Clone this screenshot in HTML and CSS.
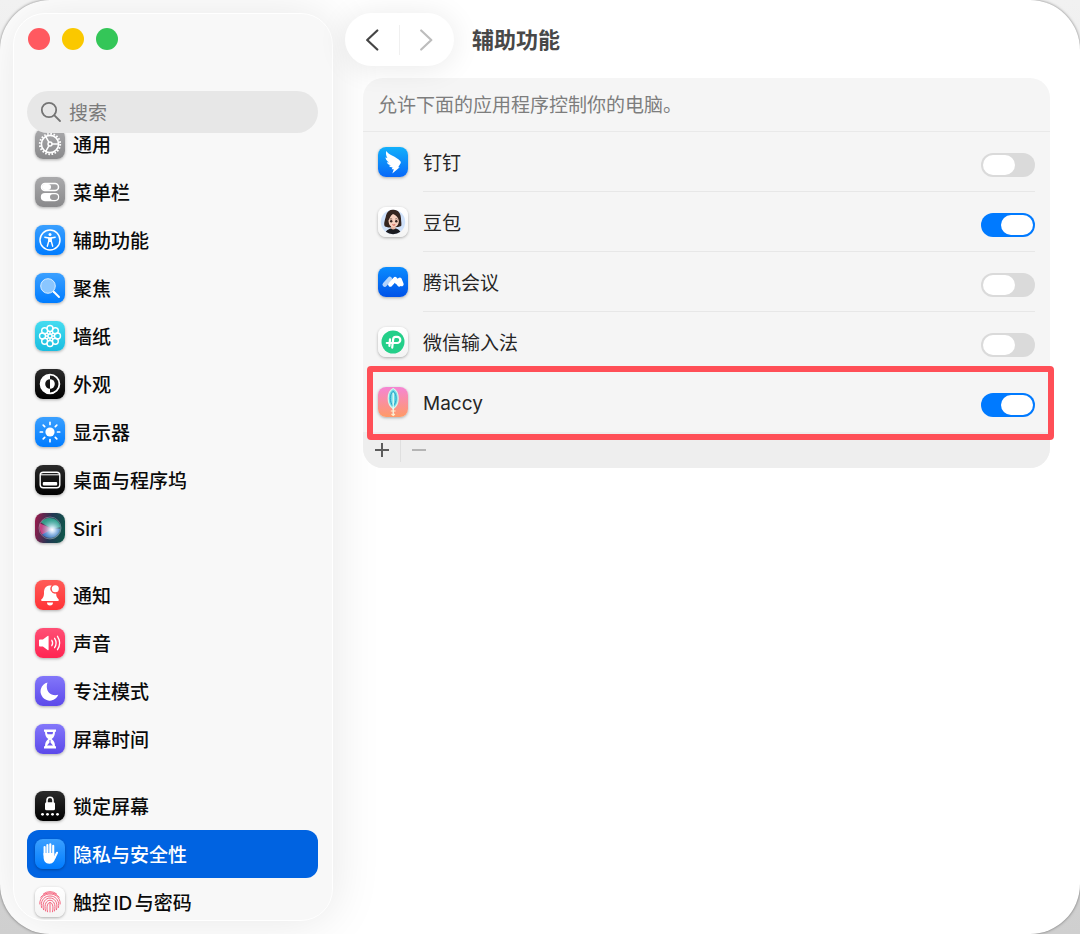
FILE: index.html
```html
<!DOCTYPE html>
<html lang="zh-CN">
<head>
    <meta charset="UTF-8">
    <meta name="viewport" content="width=device-width, initial-scale=1.0">
    <title>辅助功能</title>
    <link rel="stylesheet" href="styles.css">
</head>
<body>

    <div class="window">

        <!-- Sidebar -->
        <aside class="sidebar">
            <div class="traffic">
                <button class="light light-close" aria-label="关闭"></button>
                <button class="light light-min" aria-label="最小化"></button>
                <button class="light light-zoom" aria-label="缩放"></button>
            </div>

            <div class="search">
                <label for="search" aria-label="搜索">
                    <svg width="22" height="22" viewBox="0 0 22 22" fill="none" stroke="#747474" stroke-width="1.8" stroke-linecap="round"><circle cx="9" cy="9" r="7.2"/><path d="M14.4 14.4L20 20"/></svg>
                </label>
                <input type="text" id="search" placeholder="搜索">
            </div>

            <nav class="menu">
                <div class="menu-group">
                    <a class="menu-item" href="#">
                        <svg class="tile tile-gray" viewBox="0 0 30 30" fill="none" stroke="#fff"><circle cx="15" cy="15" r="10.2" stroke-width="1.9" stroke-dasharray="1.6 1.604"/><circle cx="15" cy="15" r="8.6" stroke-width="1.6"/><circle cx="15" cy="15" r="2" stroke-width="1.5"/><path d="M17 15h6.400M14 13.300L10.800 7.700M14 16.700L10.800 22.300" stroke-width="1.5"/></svg>
                        <span>通用</span>
                    </a>
                    <a class="menu-item" href="#">
                        <svg class="tile tile-gray" viewBox="0 0 30 30"><rect x="6.500" y="6.500" width="17" height="7" rx="3.500" fill="none" stroke="#fff" stroke-width="1.500"/><rect x="7" y="7" width="9" height="6" rx="3" fill="#fff"/><rect x="5.800" y="16" width="18.400" height="8.200" rx="4.100" fill="#fff"/><rect x="15" y="17.300" width="8" height="5.600" rx="2.800" fill="#9a9a9c"/></svg>
                        <span>菜单栏</span>
                    </a>
                    <a class="menu-item" href="#">
                        <svg class="tile tile-blue" viewBox="0 0 30 30"><circle cx="15" cy="15" r="10" fill="none" stroke="#fff" stroke-width="1.500"/><circle cx="15" cy="9.600" r="1.500" fill="#fff"/><path d="M9.800 12.200l4 .8M20.200 12.200l-4 .8M13.800 16l-1.500 5.200M16.200 16l1.500 5.200" fill="none" stroke="#fff" stroke-width="1.400" stroke-linecap="round" stroke-linejoin="round"/><path d="M13.100 12.300h3.800v4.700h-3.800z" fill="#fff"/></svg>
                        <span>辅助功能</span>
                    </a>
                    <a class="menu-item" href="#">
                        <svg class="tile tile-blue" viewBox="0 0 30 30"><path d="M18.500 18.500L24 24" stroke="#fff" stroke-width="1.900" stroke-linecap="round"/><circle cx="13" cy="13" r="7.300" fill="#8ac6ff" stroke="#d6ecff" stroke-width="1"/></svg>
                        <span>聚焦</span>
                    </a>
                    <a class="menu-item" href="#">
                        <svg class="tile tile-cyan" viewBox="0 0 30 30" fill="none" stroke="#fff" stroke-width="1.400"><circle cx="15" cy="7.500" r="3"/><circle cx="20.300" cy="9.700" r="3"/><circle cx="22.500" cy="15" r="3"/><circle cx="20.300" cy="20.300" r="3"/><circle cx="15" cy="22.500" r="3"/><circle cx="9.700" cy="20.300" r="3"/><circle cx="7.500" cy="15" r="3"/><circle cx="9.700" cy="9.700" r="3"/><circle cx="15" cy="15" r="2"/><path d="M15 10.500v2.500M15 17v2.500M10.500 15h2.500M17 15h2.500M11.800 11.800l1.800 1.800M16.400 16.400l1.800 1.800M18.200 11.800l-1.800 1.800M13.600 16.400l-1.800 1.800"/></svg>
                        <span>墙纸</span>
                    </a>
                    <a class="menu-item" href="#">
                        <svg class="tile tile-black" viewBox="0 0 30 30"><circle cx="15" cy="15" r="9.400" fill="none" stroke="#fff" stroke-width="1.800"/><path d="M15 5.600a9.400 9.400 0 0 0 0 18.800v-4.600a4.800 4.800 0 0 1 0-9.600z" fill="#fff"/><path d="M15 10.200a4.800 4.800 0 0 1 0 9.600z" fill="#fff"/></svg>
                        <span>外观</span>
                    </a>
                    <a class="menu-item" href="#">
                        <svg class="tile tile-blue" viewBox="0 0 30 30" stroke="#fff" stroke-width="1.700" stroke-linecap="round"><circle cx="15" cy="15" r="4.600" fill="#fff" stroke="none"/><path d="M15 5.300v2.200M15 22.500v2.200M5.300 15h2.200M22.500 15h2.200M8.200 8.200l1.500 1.500M20.300 20.300l1.500 1.500M21.800 8.200l-1.500 1.500M9.700 20.300l-1.500 1.500"/></svg>
                        <span>显示器</span>
                    </a>
                    <a class="menu-item" href="#">
                        <svg class="tile tile-black" viewBox="0 0 30 30"><rect x="5.200" y="7.200" width="19.600" height="15.600" rx="3" fill="none" stroke="#fff" stroke-width="1.400"/><path d="M6 9.800h18" stroke="#fff" stroke-width="1"/><rect x="7.800" y="17" width="14.400" height="3.600" rx="1" fill="#fff"/></svg>
                        <span>桌面与程序坞</span>
                    </a>
                    <a class="menu-item" href="#">
                        <svg class="tile tile-siri" viewBox="0 0 30 30">
                            <defs>
                                <radialGradient id="orb" cx=".6" cy=".58" r=".5"><stop offset="0" stop-color="#fff"/><stop offset=".25" stop-color="#e4f2ff" stop-opacity=".85"/><stop offset="1" stop-color="#8fc4dc" stop-opacity="0"/></radialGradient>
                            </defs>
                            <path d="M6 9.500C10 2.500 24 3.500 25.200 14L17 16z" fill="#2fb896" opacity=".8"/>
                            <path d="M7 21C11 27 23 26.500 25 16L16 15z" fill="#3379dc" opacity=".8"/>
                            <path d="M5 10.500Q3.500 16 7 21.500L18 16z" fill="#ec4b93" opacity=".75"/>
                            <circle cx="15" cy="15" r="11" fill="url(#orb)" stroke="#d5dfe8" stroke-opacity=".45" stroke-width=".8"/>
                        </svg>
                        <span>Siri</span>
                    </a>
                </div>

                <div class="menu-group">
                    <a class="menu-item" href="#">
                        <svg class="tile tile-red" viewBox="0 0 30 30"><path d="M14.500 5.400c-4 .3-5.500 3.500-5.500 7 0 4-.8 5.300-2.500 6.800-.7.700-.3 1.800.6 1.800h15.800c.9 0 1.300-1.100.6-1.800-1.500-1.400-2.200-2.500-2.400-5.600a4.900 4.900 0 0 1-4.400-8.200z" fill="#fff"/><circle cx="20.300" cy="8.800" r="3.500" fill="#fff"/><path d="M12 22.400h6a3 3 0 0 1-6 0z" fill="#fff"/></svg>
                        <span>通知</span>
                    </a>
                    <a class="menu-item" href="#">
                        <svg class="tile tile-pink" viewBox="0 0 30 30"><path d="M4 12.500q0-.9.900-.9h3L12.600 8q1-.7 1 .5v13q0 1.200-1 .5L7.900 18.400h-3q-.9 0-.9-.9z" fill="#fff"/><g fill="none" stroke="#fff" stroke-width="1.300" stroke-linecap="round"><path d="M16.800 12.300q1.700 2.700 0 5.400"/><path d="M19.600 10.300q3 4.700 0 9.400"/><path d="M22.500 8.300q4.300 6.700 0 13.400"/></g></svg>
                        <span>声音</span>
                    </a>
                    <a class="menu-item" href="#">
                        <svg class="tile tile-purple" viewBox="0 0 30 30"><path d="M12.500 6.500C9.800 14 15 21 23.300 18.800A9.200 9.200 0 1 1 12.500 6.500z" fill="#fff"/></svg>
                        <span>专注模式</span>
                    </a>
                    <a class="menu-item" href="#">
                        <svg class="tile tile-purple" viewBox="0 0 30 30"><path d="M9 5.500h12v2.200h-1c0 3.500-1 5.500-3.300 7.300 2.300 1.800 3.300 3.800 3.300 7.300h1v2.200H9v-2.200h1c0-3.500 1-5.500 3.300-7.300C11 13.200 10 11.200 10 7.700H9z" fill="#fff"/><path d="M12 8h6q0 1.200-.6 2.300h-4.800Q12 9.200 12 8zM14.500 16h1v2.500l2.500 3h-6l2.500-3z" fill="#6f5cf0"/></svg>
                        <span>屏幕时间</span>
                    </a>
                </div>

                <div class="menu-group">
                    <a class="menu-item" href="#">
                        <svg class="tile tile-black" viewBox="0 0 30 30" fill="#fff"><rect x="10" y="11.200" width="10" height="8" rx="1.500"/><path d="M12 12V9.300a3 3 0 0 1 6 0V12" fill="none" stroke="#fff" stroke-width="1.600"/><circle cx="7.500" cy="23.300" r="1.400"/><circle cx="12.500" cy="23.300" r="1.400"/><circle cx="17.500" cy="23.300" r="1.400"/><circle cx="22.500" cy="23.300" r="1.400"/></svg>
                        <span>锁定屏幕</span>
                    </a>
                    <a class="menu-item active" href="#">
                        <svg class="tile tile-blue" viewBox="0 0 30 30"><g fill="none" stroke="#fff" stroke-width="2.100" stroke-linecap="round"><path d="M9.600 8v8M12.400 6v9M15.300 5.300v9M18.200 6.800v9M22 13.800l-2.500 5"/></g><path d="M8.550 14h10.700v3.500l1.500.5c-1 3.500-2.500 6.700-6.300 6.700-4.200 0-5.900-3-5.900-6.700z" fill="#fff"/></svg>
                        <span>隐私与安全性</span>
                    </a>
                    <a class="menu-item" href="#">
                        <svg class="tile tile-white" viewBox="0 0 30 30" fill="none" stroke="#f4657f" stroke-width="1" stroke-linecap="round"><path d="M8.500 6.800a10.500 10.500 0 0 1 13 0M5.800 10.300C10 4.300 20 4.300 24.200 10.300M4.800 17C4 3.500 26 3.500 25.200 17M6.500 20.500C3.500 5 26.500 5 23.500 20.500M8.500 22.700C4.500 7 25.500 7 21.500 22.700M10.500 24C6.800 9.500 23.200 9.500 19.500 24M12.500 24.800c-3-12.500 8-12.500 5 0M15 15.500v9.500"/></svg>
                        <span>触控ID与密码</span>
                    </a>
                </div>
            </nav>
        </aside>

        <!-- Detail pane -->
        <main class="content">
            <header class="toolbar">
                <div class="history">
                    <button aria-label="后退"><svg width="14" height="22" viewBox="0 0 14 22" fill="none" stroke="#454545" stroke-width="2.200" stroke-linecap="round" stroke-linejoin="round"><path d="M12.300 1.500L2.200 11l10.100 9.500"/></svg></button>
                    <button aria-label="前进" disabled><svg width="14" height="22" viewBox="0 0 14 22" fill="none" stroke="#bdbdbd" stroke-width="2.200" stroke-linecap="round" stroke-linejoin="round"><path d="M1.200 1.500L11.300 11 1.200 20.500"/></svg></button>
                </div>
                <h1>辅助功能</h1>
            </header>

            <section class="panel">
                <p class="panel-note">允许下面的应用程序控制你的电脑。</p>

                <div class="app">
                    <svg class="tile tile-ding" viewBox="0 0 30 30"><path d="M8.300 4c1.200 2 3 3.200 5.700 4.600 3.500 1.800 6.500 3.500 8.200 5.400.8.900.8 1.500.3 2.400l-2.300 3.800h1.500l-7.400 6.300 1.500-4.300h-2.200l1-1.700c-1.600 0-3-.6-3.700-1.700l2-.4c-2.200-.6-3.600-1.500-4.100-3.100l2.200.2C8.700 13.800 7.600 12.200 7.500 10.300l2 .9C8.100 9 7.600 6.500 8.300 4z" fill="#fff"/></svg>
                    <div class="app-row">
                        <label for="app-dingtalk">钉钉</label>
                        <input class="switch" type="checkbox" role="switch" id="app-dingtalk">
                    </div>
                </div>
                <div class="app">
                    <svg class="tile tile-white" viewBox="0 0 30 30">
                        <circle cx="15" cy="15" r="12.200" fill="#cfe1fa"/>
                        <path d="M7 19.500C5 17 7.500 12 8 8.500 9 4.500 12 2.500 15.500 2.800c5 0 7.500 4 7.500 9 0 2.500.8 5 .2 7.200l-3.200 1-9.500.5z" fill="#33241f"/>
                        <path d="M13 18.500h4.500V23H13z" fill="#e8b8a4"/>
                        <path d="M7.800 24.800c1.700-2.300 3.700-3 5.200-3.300 1.500 1.200 3 1.200 4.500 0 1.800.3 3.700 1.200 4.900 3.300a12.200 12.200 0 0 1-14.600 0z" fill="#1b1b20"/>
                        <path d="M10.500 13.500c1.200-2.300 2-5 4.500-6.500 2.800 1 5.300 3.500 5.800 6.500.2 3.500-1.500 6.500-5.200 6.700-3.400-.2-5-3-5.100-6.700z" fill="#f7d0bf"/>
                        <path d="M11.800 12.200q1.200-.8 2.400-.1M17.300 12q1.200-.7 2.300.2" stroke="#4a332d" stroke-width=".7" fill="none"/>
                        <circle cx="13.200" cy="14.300" r="1.200" fill="#33221f"/><circle cx="18.300" cy="14.300" r="1.200" fill="#33221f"/>
                        <path d="M14.800 17.900q1 .7 2.100 0" stroke="#c9483f" stroke-width="1" fill="none" stroke-linecap="round"/>
                    </svg>
                    <div class="app-row">
                        <label for="app-doubao">豆包</label>
                        <input class="switch" type="checkbox" role="switch" id="app-doubao" checked>
                    </div>
                </div>
                <div class="app">
                    <svg class="tile tile-meeting" viewBox="0 0 30 30" fill="none" stroke="#fff" stroke-linejoin="round" stroke-linecap="round"><path d="M6.800 17.500l5-5.500" stroke-width="4.600" opacity=".7"/><path d="M12.300 17.500l4.800-5.300 4.200 5.100" stroke-width="4.400"/><path d="M18.800 15l3-2.400 1.900 4.700" stroke-width="4"/></svg>
                    <div class="app-row">
                        <label for="app-meeting">腾讯会议</label>
                        <input class="switch" type="checkbox" role="switch" id="app-meeting">
                    </div>
                </div>
                <div class="app">
                    <svg class="tile tile-white" viewBox="0 0 30 30"><circle cx="15" cy="15" r="11.500" fill="#24cf89"/><path d="M14.200 20.600l1-8.600q.3-2.200 2.400-2.200h1.600a3 3 0 0 1 0 6.200H8.800M12 12.300l-.6 6.600" fill="none" stroke="#fff" stroke-width="2.200" stroke-linecap="round" stroke-linejoin="round"/></svg>
                    <div class="app-row">
                        <label for="app-wechat">微信输入法</label>
                        <input class="switch" type="checkbox" role="switch" id="app-wechat">
                    </div>
                </div>
                <div class="app highlighted">
                    <svg class="tile tile-maccy" viewBox="0 0 30 30"><path d="M15.200 1.500c3.600 1.800 5 6 5 10 0 4.500-1.700 8-5 10.300-3.300-2.300-5-5.800-5-10.300 0-4 1.400-8.200 5-10z" fill="#6adbe6" stroke="#d5f7ea" stroke-width="1.200"/><path d="M15.200 4.200c2 1.500 2.900 4.300 2.900 7.200 0 3-.9 5.600-2.900 7.600-2-2-2.900-4.600-2.900-7.600 0-2.900.9-5.700 2.900-7.200z" fill="none" stroke="#2f9fc4" stroke-width="1"/><path d="M15.200 6v22" stroke="#eefff6" stroke-width="1.200"/><path d="M12.800 24h4.800M13.500 27l1.700 1.500 1.700-1.500" stroke="#fff2cd" stroke-width="1.200" fill="none"/></svg>
                    <div class="app-row">
                        <label for="app-maccy">Maccy</label>
                        <input class="switch" type="checkbox" role="switch" id="app-maccy" checked>
                    </div>
                </div>

                <footer class="panel-footer">
                    <button aria-label="添加"><svg width="14" height="14" viewBox="0 0 14 14" stroke="#5c5c5c" stroke-width="2"><path d="M7 0v14M0 7h14"/></svg></button>
                    <button aria-label="移除" disabled><svg width="14" height="14" viewBox="0 0 14 14" stroke="#b4b4b4" stroke-width="2"><path d="M0 7h14"/></svg></button>
                </footer>
            </section>
        </main>

    </div>

</body>
</html>
```

FILE: styles.css
```css
* {
    box-sizing: border-box;
}

body {
    margin: 0;
    background: linear-gradient(#f1f1f1, #cfcfcf);
    font-family: Inter, "Noto Sans CJK SC", sans-serif;
    font-size: 19px;
    line-height: 28px;
    text-autospace: normal;
    color: #0a0a0a;
}

button,
input {
    font: inherit;
    margin: 0;
    padding: 0;
    border: 0;
    background: none;
}

.window {
    display: flex;
    height: 100vh;
    min-height: 560px;
    padding: 13px;
    background: #fff;
    border-radius: 50px;
    box-shadow: 0 0 3px rgba(0, 0, 0, 0.5);
    overflow: hidden;
}

/* Sidebar */
.sidebar {
    display: flex;
    flex-direction: column;
    flex: none;
    width: 320px;
    padding: 0 14px 0 13px;
    background: #f8f8f8;
    border: 1px solid #fff;
    border-radius: 32px;
    box-shadow: 0 0 50px rgba(0, 0, 0, 0.1);
    overflow: hidden;
}

.traffic {
    display: flex;
    gap: 12px;
    height: 77px;
    padding: 14px 1px 0;
}

.light {
    width: 22px;
    height: 22px;
    border-radius: 50%;
}

.light-close {
    background: #ff5960;
}

.light-min {
    background: #fac800;
}

.light-zoom {
    background: #34c658;
}

.search {
    display: flex;
    align-items: center;
    flex: none;
    gap: 7px;
    height: 42px;
    padding: 0 13px;
    background: #e7e7e7;
    border-radius: 21px;
    z-index: 1;
}

.search label {
    display: flex;
}

.search input {
    flex: 1;
    min-width: 0;
    padding-top: 4px;
    outline: none;
}

.search input::placeholder {
    color: #7b7b7b;
    opacity: 1;
}

.menu {
    display: flex;
    flex-direction: column;
    flex: 1;
    gap: 19px;
    min-height: 0;
    margin-top: -13px;
    font-weight: 500;
}

.menu-item {
    display: flex;
    align-items: center;
    gap: 8px;
    height: 48px;
    padding: 0 8px;
    border-radius: 12px;
    color: inherit;
    text-decoration: none;
}

.menu-item span {
    padding-top: 3px;
}

.menu-item.active {
    background: #0063e1;
    color: #fff;
}

/* Icon tiles */
.tile {
    flex: none;
    width: 30px;
    height: 30px;
    border-radius: 8px;
    box-shadow: 0 1px 3px rgba(0, 0, 0, 0.3);
}

.tile-gray {
    background: linear-gradient(#aaaaac, #89898b);
}

.tile-blue {
    background: linear-gradient(#3ba0ff, #007cff);
}

.tile-cyan {
    background: linear-gradient(#45dcf0, #1bbde0);
}

.tile-black {
    background: linear-gradient(#2b2b2b, #000);
}

.tile-siri {
    background: linear-gradient(100deg, #a01a4c, #233653 50%, #0c5a48);
}

.tile-red {
    background: linear-gradient(#ff5b57, #ff3236);
}

.tile-pink {
    background: linear-gradient(#ff4f75, #ff2552);
}

.tile-purple {
    background: linear-gradient(#8377fa, #5c49ea);
}

.tile-white {
    background: linear-gradient(#fff, #f4f4f4);
}

.tile-ding {
    background: linear-gradient(#12b0fb, #0868f8);
}

.tile-meeting {
    background: linear-gradient(#0a8cff, #0052e8);
}

.tile-maccy {
    background: linear-gradient(#f585d4, #ff9a66);
}

/* Detail pane */
.content {
    flex: 1;
    min-width: 0;
    padding: 0 17px 0 12px;
}

.toolbar {
    display: flex;
    align-items: center;
    gap: 18px;
}

.history {
    display: flex;
    align-items: center;
    width: 109px;
    height: 53px;
    background: #fff;
    border-radius: 27px;
    box-shadow: 0 2px 30px rgba(0, 0, 0, 0.09);
}

.history button {
    display: flex;
    flex: 1;
    align-items: center;
    justify-content: center;
    height: 30px;
}

.history button + button {
    border-left: 1px solid #f0f0f0;
}

.toolbar h1 {
    margin: 0;
    font-size: 22px;
    font-weight: 700;
    color: #484848;
}

.panel {
    margin: 12px 0 0 18px;
    background: #f5f5f5;
    border-radius: 20px;
}

.panel-note {
    margin: 0;
    padding: 14px 15px 11px;
    border-bottom: 1px solid #e9e9e9;
    color: #7d7d7d;
}

.app {
    display: flex;
    align-items: center;
    gap: 15px;
    height: 60px;
    padding: 0 15px;
    color: #262626;
}

.app-row {
    display: flex;
    align-items: center;
    justify-content: space-between;
    flex: 1;
    height: 60px;
    padding-top: 4px;
    border-bottom: 1px solid #e7e7e7;
}

.app.highlighted {
    position: relative;
}

.highlighted .app-row {
    border-bottom-color: transparent;
}

.highlighted::after {
    content: "";
    position: absolute;
    inset: -6px -4px -8px 4px;
    border: 6px solid #ff4f57;
    border-radius: 4px;
    pointer-events: none;
}

.switch {
    appearance: none;
    width: 54px;
    height: 24px;
    margin-top: 2px;
    padding: 2px;
    border-radius: 12px;
    background: #dadada;
}

.switch::before {
    content: "";
    display: block;
    width: 32px;
    height: 20px;
    border-radius: 10px;
    background: #fff;
}

.switch:checked {
    background: #007aff;
}

.switch:checked::before {
    margin-left: auto;
}

.panel-footer {
    display: flex;
    align-items: center;
    height: 36px;
    background: #eeeeee;
    border-radius: 0 0 20px 20px;
}

.panel-footer button {
    display: flex;
    align-items: center;
    justify-content: center;
    width: 37px;
    height: 24px;
}

.panel-footer button + button {
    border-left: 1px solid #dfdfdf;
}
```
